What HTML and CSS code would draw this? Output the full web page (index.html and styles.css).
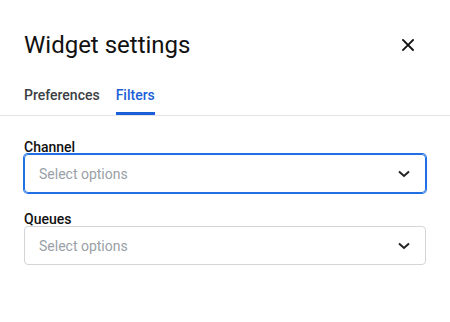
FILE: index.html
```html
<!DOCTYPE html>
<html lang="en">
<head>
    <meta charset="UTF-8">
    <title>Widget settings</title>
    <link rel="stylesheet" href="styles.css">
</head>
<body>
    <div class="panel">
        <div class="header">
            <h1>Widget settings</h1>
            <button class="close" aria-label="Close">
                <svg width="12" height="12" viewBox="0 0 12 12"><path d="M1 1L11 11M11 1L1 11" stroke="#111" stroke-width="1.8" stroke-linecap="square"/></svg>
            </button>
        </div>
        <ul class="tabs">
            <li>Preferences</li>
            <li class="active">Filters</li>
        </ul>
        <div class="body">
            <div class="field">
                <label>Channel</label>
                <div class="select focused">
                    <span>Select options</span>
                    <svg width="12" height="8" viewBox="0 0 12 8"><path d="M1 1.5L6 6L11 1.5" fill="none" stroke="#222" stroke-width="2"/></svg>
                </div>
            </div>
            <div class="field">
                <label>Queues</label>
                <div class="select">
                    <span>Select options</span>
                    <svg width="12" height="8" viewBox="0 0 12 8"><path d="M1 1.5L6 6L11 1.5" fill="none" stroke="#222" stroke-width="2"/></svg>
                </div>
            </div>
        </div>
    </div>
</body>
</html>
```

FILE: styles.css
```css
*{
    margin: 0;
    padding: 0;
    box-sizing: border-box;
}
body{
    background: #fff;
    font-family: Roboto, "Liberation Sans", sans-serif;
    color: #111;
}
.panel{
    width: 450px;
}
.header{
    display: flex;
    align-items: center;
    justify-content: space-between;
    padding: 29px 36px 0 24px;
    height: 60px;
}
.header h1{
    font-size: 24px;
    font-weight: 400;
    line-height: 30px;
    color: #111;
}
.close{
    display: flex;
    border: none;
    background: none;
    width: 12px;
    height: 12px;
}
.tabs{
    display: flex;
    gap: 16px;
    padding: 0 24px;
    margin-top: 22px;
    border-bottom: 1px solid #e2e4e6;
    list-style: none;
}
.tabs li{
    padding: 4px 0 8px;
    border-bottom: 3px solid transparent;
    font-size: 14px;
    font-weight: 500;
    line-height: 18px;
    color: #3c4043;
}
.tabs .active{
    color: #1a5fd8;
    border-bottom-color: #1a5fd8;
}
.body{
    display: flex;
    flex-direction: column;
    gap: 19px;
    padding: 24px 24px 0;
}
.field label{
    display: block;
    font-size: 14px;
    font-weight: 500;
    line-height: 14px;
    color: #111;
}
.select{
    display: flex;
    align-items: center;
    justify-content: space-between;
    height: 39px;
    padding: 0 15px 0 14px;
    border: 1px solid #d3d5d8;
    border-radius: 4px;
}
.select.focused{
    border-color: #1f6fe5;
    box-shadow: 0 0 0 1px #1f6fe5;
}
.select span{
    font-size: 14px;
    color: #9aa0a6;
}
```
